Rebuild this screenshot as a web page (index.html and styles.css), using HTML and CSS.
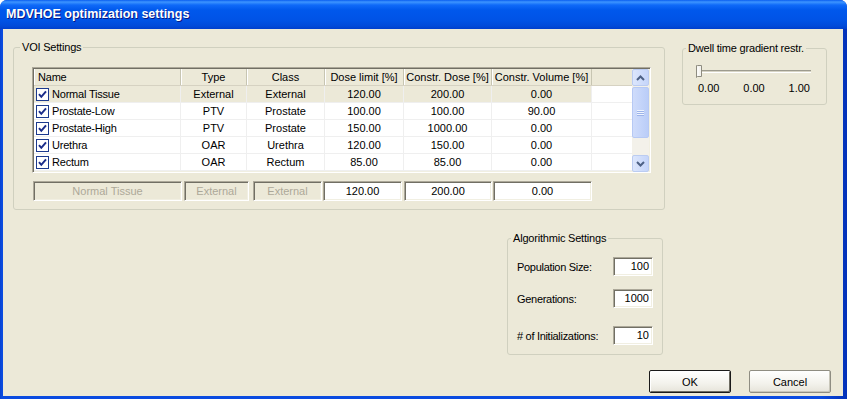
FILE: index.html
```html
<!DOCTYPE html>
<html lang="en">
<head>
    <meta charset="UTF-8">
    <title>MDVHOE optimization settings</title>
    <link rel="stylesheet" href="styles.css">
</head>
<body>
    <div class="window">
        <div class="titlebar"><span class="title">MDVHOE optimization settings</span></div>
        <div class="client">
            <div class="top-row">
                <div class="group voi">
                    <span class="group-label">VOI Settings</span>
                    <div class="listview">
                        <div class="list-main">
                            <div class="list-row list-head">
                                <span class="c-name">Name</span>
                                <span class="c-type">Type</span>
                                <span class="c-class">Class</span>
                                <span class="c-dose">Dose limit [%]</span>
                                <span class="c-cdose">Constr. Dose [%]</span>
                                <span class="c-cvol">Constr. Volume [%]</span>
                                <span class="c-fill"></span>
                            </div>
                            <div class="list-row selected">
                                <span class="c-name"><svg class="check" width="13" height="13" viewBox="0 0 13 13"><rect x="0.5" y="0.5" width="12" height="12" fill="#fff" stroke="#1C3A8E"/><path d="M3 6.2 L5.3 8.8 L10 3.4" fill="none" stroke="#1B2D8A" stroke-width="2"/></svg>Normal Tissue</span>
                                <span class="c-type">External</span>
                                <span class="c-class">External</span>
                                <span class="c-dose">120.00</span>
                                <span class="c-cdose">200.00</span>
                                <span class="c-cvol">0.00</span>
                                <span class="c-fill"></span>
                            </div>
                            <div class="list-row">
                                <span class="c-name"><svg class="check" width="13" height="13" viewBox="0 0 13 13"><rect x="0.5" y="0.5" width="12" height="12" fill="#fff" stroke="#1C3A8E"/><path d="M3 6.2 L5.3 8.8 L10 3.4" fill="none" stroke="#1B2D8A" stroke-width="2"/></svg>Prostate-Low</span>
                                <span class="c-type">PTV</span>
                                <span class="c-class">Prostate</span>
                                <span class="c-dose">100.00</span>
                                <span class="c-cdose">100.00</span>
                                <span class="c-cvol">90.00</span>
                                <span class="c-fill"></span>
                            </div>
                            <div class="list-row">
                                <span class="c-name"><svg class="check" width="13" height="13" viewBox="0 0 13 13"><rect x="0.5" y="0.5" width="12" height="12" fill="#fff" stroke="#1C3A8E"/><path d="M3 6.2 L5.3 8.8 L10 3.4" fill="none" stroke="#1B2D8A" stroke-width="2"/></svg>Prostate-High</span>
                                <span class="c-type">PTV</span>
                                <span class="c-class">Prostate</span>
                                <span class="c-dose">150.00</span>
                                <span class="c-cdose">1000.00</span>
                                <span class="c-cvol">0.00</span>
                                <span class="c-fill"></span>
                            </div>
                            <div class="list-row">
                                <span class="c-name"><svg class="check" width="13" height="13" viewBox="0 0 13 13"><rect x="0.5" y="0.5" width="12" height="12" fill="#fff" stroke="#1C3A8E"/><path d="M3 6.2 L5.3 8.8 L10 3.4" fill="none" stroke="#1B2D8A" stroke-width="2"/></svg>Urethra</span>
                                <span class="c-type">OAR</span>
                                <span class="c-class">Urethra</span>
                                <span class="c-dose">120.00</span>
                                <span class="c-cdose">150.00</span>
                                <span class="c-cvol">0.00</span>
                                <span class="c-fill"></span>
                            </div>
                            <div class="list-row">
                                <span class="c-name"><svg class="check" width="13" height="13" viewBox="0 0 13 13"><rect x="0.5" y="0.5" width="12" height="12" fill="#fff" stroke="#1C3A8E"/><path d="M3 6.2 L5.3 8.8 L10 3.4" fill="none" stroke="#1B2D8A" stroke-width="2"/></svg>Rectum</span>
                                <span class="c-type">OAR</span>
                                <span class="c-class">Rectum</span>
                                <span class="c-dose">85.00</span>
                                <span class="c-cdose">85.00</span>
                                <span class="c-cvol">0.00</span>
                                <span class="c-fill"></span>
                            </div>
                        </div>
                        <div class="vscroll">
                            <div class="sb-btn"><svg width="9" height="6" viewBox="0 0 9 6"><path d="M1 5 L4.5 1.5 L8 5" fill="none" stroke="#4D6185" stroke-width="2"/></svg></div>
                            <div class="sb-track">
                                <div class="sb-thumb"><span class="grip"></span></div>
                            </div>
                            <div class="sb-btn"><svg width="9" height="6" viewBox="0 0 9 6"><path d="M1 1 L4.5 4.5 L8 1" fill="none" stroke="#4D6185" stroke-width="2"/></svg></div>
                        </div>
                    </div>
                    <div class="edit-row">
                        <span class="edit disabled e-name">Normal Tissue</span>
                        <span class="edit disabled e-type">External</span>
                        <span class="edit disabled e-class">External</span>
                        <span class="edit e-dose">120.00</span>
                        <span class="edit e-cdose">200.00</span>
                        <span class="edit e-cvol">0.00</span>
                    </div>
                </div>

                <div class="group dwell">
                    <span class="group-label">Dwell time gradient restr.</span>
                    <div class="slider">
                        <div class="track"></div>
                        <svg class="thumb" width="7" height="13" viewBox="0 0 7 13"><path d="M1.5 0.5 H5.5 V11.5 H1.5 L0.5 12.5 V0.5 Z" fill="#F4F3EE" stroke="#8E8C80"/><path d="M2 2 V11" stroke="#fff"/></svg>
                    </div>
                    <div class="slider-values">
                        <span>0.00</span>
                        <span>0.00</span>
                        <span>1.00</span>
                    </div>
                </div>
            </div>

            <div class="group algo">
                <span class="group-label">Algorithmic Settings</span>
                <div class="algo-row">
                    <span class="algo-label">Population Size:</span>
                    <span class="edit num">100</span>
                </div>
                <div class="algo-row second">
                    <span class="algo-label">Generations:</span>
                    <span class="edit num">1000</span>
                </div>
                <div class="algo-row third">
                    <span class="algo-label"># of Initializations:</span>
                    <span class="edit num">10</span>
                </div>
            </div>

            <div class="buttons">
                <button class="btn default">OK</button>
                <button class="btn">Cancel</button>
            </div>
        </div>
    </div>
</body>
</html>
```

FILE: styles.css
```css
* {
    box-sizing: border-box;
}

html, body {
    margin: 0;
    width: 847px;
    height: 399px;
    overflow: hidden;
    background: #fff;
}

body {
    font-family: "Liberation Sans", Arial, sans-serif;
    font-size: 11px;
    color: #000;
}

/* window frame */
.window {
    width: 847px;
    height: 399px;
    display: flex;
    flex-direction: column;
    background: linear-gradient(to right, #0842D0, #0A4BE0 2px, #0A4BE0 97%, #0331B8);
    border-radius: 7px 7px 0 0;
    overflow: hidden;
}

.titlebar {
    height: 29px;
    flex: none;
    display: flex;
    align-items: center;
    padding: 0 0 1px 6px;
    background: linear-gradient(to bottom, #0A5EF0 0, #3D95FF 2px, #0F6AF8 5px, #0058EC 10px, #0053E6 20px, #014AD9 26px, #003FCC 29px);
}

.title {
    color: #fff;
    font-weight: bold;
    font-size: 12.5px;
    text-shadow: 1px 1px 0 #0A1883;
}

.client {
    flex: 1;
    margin: 0 4px 3px 3px;
    background: #ECE9D8;
    padding: 18px 0 0 10px;
}

.top-row {
    display: flex;
    align-items: flex-start;
}

/* group boxes */
.group {
    position: relative;
    border: 1px solid #D0D0BF;
    border-radius: 3px;
}

.group-label {
    position: absolute;
    top: -7px;
    left: 6px;
    padding: 0 2px;
    line-height: 13px;
    letter-spacing: -0.2px;
    background: #ECE9D8;
}

.dwell .group-label,
.algo .group-label {
    left: 3px;
}

.voi {
    width: 652px;
    height: 163px;
    padding: 19px 0 0 18px;
}

.dwell {
    width: 145px;
    height: 57px;
    margin: 1px 0 0 17px;
    padding: 16px 0 0 13px;
}

.algo {
    width: 156px;
    height: 117px;
    margin: 28px 0 0 494px;
    padding: 0 9px 0 9px;
}

/* list view */
.listview {
    display: flex;
    width: 619px;
    height: 106px;
    border: 1px solid;
    border-color: #ACA899 #FFFFFF #FFFFFF #ACA899;
    box-shadow: inset 1px 1px 0 #716F64, inset -1px -1px 0 #F1EFE2;
    padding: 1px;
    background: #fff;
}

.list-main {
    width: 598px;
}

.list-row {
    display: flex;
    height: 17px;
    line-height: 16px;
    border-bottom: 1px solid #EFEFEF;
}

.list-row span {
    border-right: 1px solid #EFEFEF;
    text-align: center;
    white-space: nowrap;
    overflow: hidden;
}

.list-row.selected span:not(.c-fill) {
    background: #ECE9D8;
}

.list-head {
    background: #ECE9D8;
    border-bottom: 1px solid #D6D2C2;
}

.list-head span {
    border-right: 1px solid #C7C5B2;
    box-shadow: inset 1px 0 0 #FFFFFF;
}

.list-head .c-name {
    padding-left: 4px;
}

.list-head .c-fill {
    border-right: none;
    box-shadow: none;
}

.c-name {
    width: 147px;
    text-align: left !important;
    display: flex;
    align-items: center;
    padding-left: 2px;
    letter-spacing: -0.2px;
}

.check {
    flex: none;
    margin-right: 3px;
}

.c-type { width: 66px; }
.c-class { width: 78px; }
.c-dose { width: 79px; }
.c-cdose { width: 88px; }
.c-cvol { width: 100px; }
.c-fill { width: 40px; border-right: none !important; }

/* scrollbar */
.vscroll {
    width: 17px;
    display: flex;
    flex-direction: column;
    background: #F3F1EA;
}

.sb-btn {
    height: 17px;
    flex: none;
    display: flex;
    align-items: center;
    justify-content: center;
    border: 1px solid #BBCCF1;
    border-radius: 2px;
    background: linear-gradient(to right, #DCE6FC, #C5D5FA);
}

.sb-track {
    flex: 1;
    padding: 1px 0 17px 0;
}

.sb-thumb {
    height: 51px;
    display: flex;
    align-items: center;
    justify-content: center;
    border: 1px solid #B6C9F4;
    border-radius: 2px;
    background: linear-gradient(to right, #CFDCFB, #BACDF8);
}

.grip {
    width: 7px;
    height: 6px;
    background: repeating-linear-gradient(to bottom, #EEF4FE 0, #EEF4FE 1px, #9CB3EA 1px, #9CB3EA 2px);
}

/* edit fields */
.edit-row {
    display: flex;
    margin: 8px 0 0 1px;
}

.edit {
    display: inline-block;
    height: 20px;
    line-height: 18px;
    text-align: center;
    background: #fff;
    border: 1px solid;
    border-color: #ACA899 #FFFFFF #FFFFFF #ACA899;
    box-shadow: inset 1px 1px 0 #716F64, inset -1px -1px 0 #F1EFE2;
}

.edit.disabled {
    background: #ECE9D8;
    color: #ACA899;
}

.e-name { width: 149px; margin-right: 2px; }
.e-type { width: 65px; margin-right: 4px; }
.e-class { width: 69px; margin-right: 1px; }
.e-dose { width: 79px; margin-right: 2px; }
.e-cdose { width: 88px; margin-right: 1px; }
.e-cvol { width: 99px; }

/* slider */
.slider {
    position: relative;
    width: 115px;
    height: 13px;
    padding: 5px 0 0 2px;
}

.track {
    width: 113px;
    height: 3px;
    border-top: 1px solid #9D9B8E;
    border-bottom: 1px solid #FFFFFF;
    background: #D6D3C4;
}

.thumb {
    position: absolute;
    left: 0;
    top: 0;
}

.slider-values {
    display: flex;
    justify-content: space-between;
    width: 112px;
    margin: 4px 0 0 2px;
    line-height: 13px;
}

/* algorithmic settings */
.algo-row {
    display: flex;
    align-items: center;
    justify-content: space-between;
    height: 19px;
    margin-top: 18px;
}

.algo-row.second {
    margin-top: 13px;
}

.algo-row.third {
    margin-top: 18px;
}

.algo-label {
    letter-spacing: -0.3px;
}

.edit.num {
    width: 40px;
    height: 19px;
    line-height: 17px;
    text-align: right;
    padding-right: 3px;
}

/* dialog buttons */
.buttons {
    display: flex;
    justify-content: flex-end;
    gap: 18px;
    margin: 15px 12px 0 0;
}

.btn {
    width: 82px;
    height: 23px;
    font-family: "Liberation Sans", Arial, sans-serif;
    font-size: 11px;
    color: #000;
    background: linear-gradient(to bottom, #FFFFFF, #F3F2EC 60%, #E6E4DA);
    border: 1px solid #8F8D82;
    border-radius: 2px;
    box-shadow: inset -1px -1px 0 #C9C7BA;
    padding: 0;
}

.btn.default {
    border: 1px solid #1A1A1A;
    box-shadow: inset 1px 1px 0 #FFFFFF, inset -1px -1px 0 #6E6C62;
}
```
